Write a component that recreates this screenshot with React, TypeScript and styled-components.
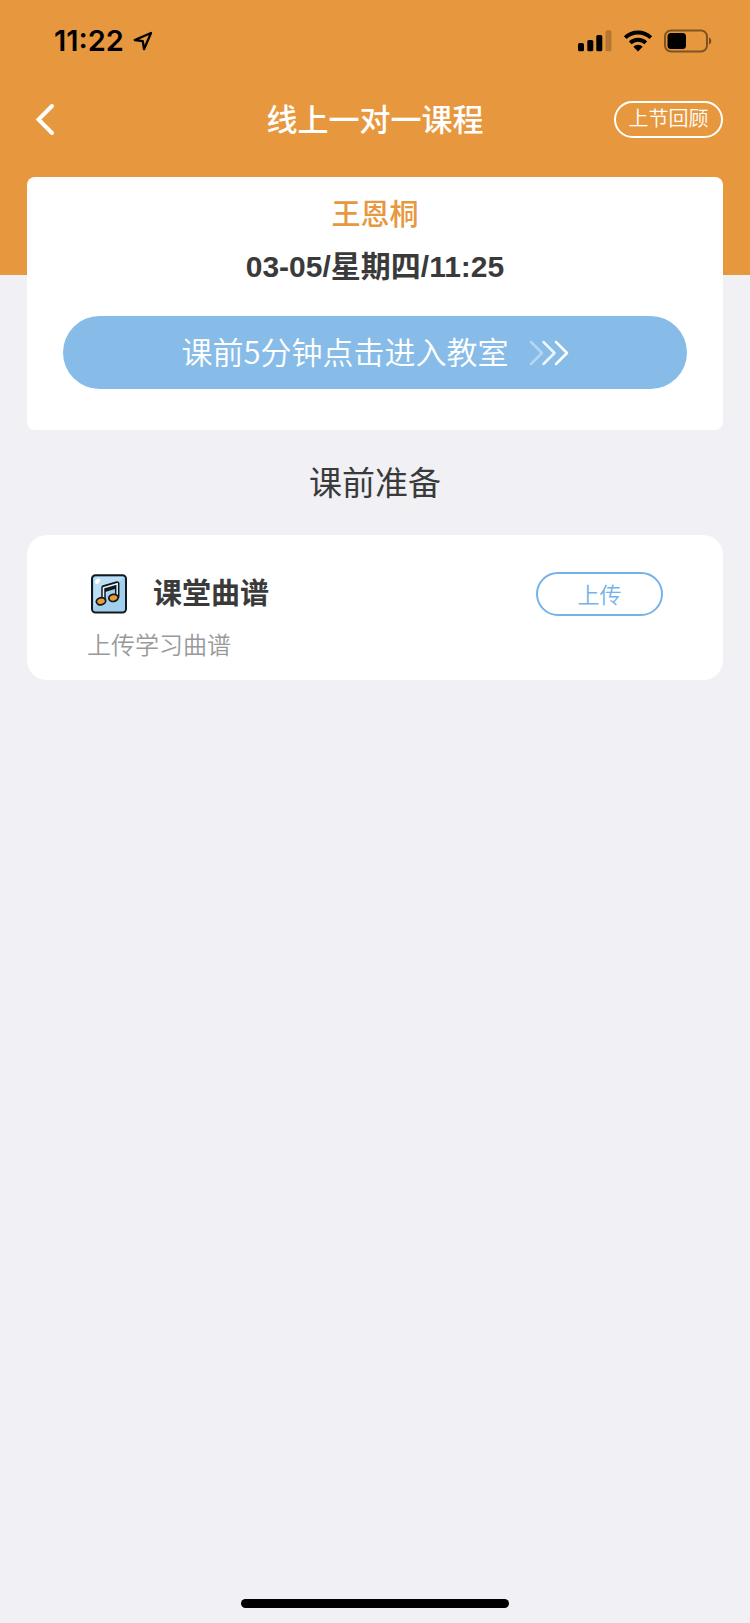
import React from "react";
import styled, { createGlobalStyle } from "styled-components";

const color = {
  orange: "#e7983f",
  blue: "#87bce8",
  outline: "#74b2ec",
  page: "#f0f0f5",
  text: "#3a3a3a",
  muted: "#999999",
};

const GlobalStyle = createGlobalStyle`
  * { box-sizing: border-box; }
  body {
    margin: 0;
    background: ${color.page};
    color: ${color.text};
    font-family: "Liberation Sans", "Noto Sans CJK SC", sans-serif;
  }
  h1, h2, h3, p { margin: 0; }
  button { font-family: "Noto Sans CJK SC", sans-serif; cursor: pointer; }
  svg { display: block; }
`;

const Page = styled.div`
  min-height: 100vh;
  display: flex;
  flex-direction: column;
`;

const Header = styled.header`
  background: ${color.orange};
  padding-bottom: 118px;
`;

const StatusBar = styled.div`
  display: flex;
  justify-content: space-between;
  align-items: center;
  height: 82px;
  padding: 0 38px 0 54px;
  color: #000;
`;

const StatusGroup = styled.div<{ $gap: number }>`
  display: flex;
  align-items: center;
  gap: ${(p) => p.$gap}px;
`;

const Clock = styled.time`
  font-family: Inter, sans-serif;
  font-size: 29px;
  font-weight: 600;
  line-height: 32px;
`;

const NavBar = styled.nav`
  display: grid;
  grid-template-columns: 1fr auto 1fr;
  align-items: center;
  height: 75px;
  padding: 0 27px;
  color: #fff;
`;

const BackButton = styled.button`
  justify-self: start;
  border: 0;
  padding: 0 8px;
  background: none;
  color: inherit;
`;

const NavTitle = styled.h1`
  padding-top: 2px;
  font-size: 31px;
  font-weight: 500;
  line-height: 40px;
`;

const PillButton = styled.button<{ $tone: string; $width: number; $height: number; $size: number }>`
  width: ${(p) => p.$width}px;
  height: ${(p) => p.$height}px;
  border: 2px solid ${(p) => p.$tone};
  border-radius: 24px;
  padding: 0 0 3px;
  background: none;
  color: ${(p) => p.$tone};
  font-size: ${(p) => p.$size}px;
  font-weight: 350;
  line-height: 30px;
  justify-self: end;
`;

const Main = styled.main`
  flex: 1;
  display: flex;
  flex-direction: column;
  margin-top: -98px;
  padding: 0 27px;
`;

const LessonCard = styled.section`
  display: flex;
  flex-direction: column;
  align-items: center;
  padding: 18px 36px 41px;
  border-radius: 8px;
  background: #fff;
`;

const StudentName = styled.h2`
  color: ${color.orange};
  font-size: 29px;
  font-weight: 500;
  line-height: 40px;
`;

const LessonTime = styled.p`
  margin: 12px 0 29px;
  font-size: 30px;
  font-weight: 700;
  line-height: 40px;
`;

const EnterButton = styled.button`
  display: flex;
  justify-content: center;
  align-items: center;
  gap: 20px;
  width: 100%;
  height: 73px;
  border: 0;
  border-radius: 37px;
  background: ${color.blue};
  color: #fff;
  font-size: 31px;
  font-weight: 350;
  line-height: 40px;
`;

const EnterLabel = styled.span`
  padding-bottom: 4px;
`;

const SectionTitle = styled.h2`
  padding: 34px 0 31px;
  font-size: 33px;
  font-weight: 400;
  line-height: 40px;
  text-align: center;
`;

const TaskCard = styled.section`
  padding: 37px 60px 16px;
  border-radius: 20px;
  background: #fff;
`;

const TaskRow = styled.div`
  display: flex;
  align-items: center;
  gap: 24px;
`;

const TaskTitle = styled.h3`
  flex: 1;
  font-size: 29px;
  font-weight: 700;
  line-height: 40px;
`;

const TaskNote = styled.p`
  margin-top: 12px;
  color: ${color.muted};
  font-size: 24px;
  font-weight: 350;
  line-height: 36px;
`;

const HomeIndicator = styled.div`
  align-self: center;
  width: 268px;
  height: 9px;
  margin-bottom: 15px;
  border-radius: 5px;
  background: #000;
`;

const LocationIcon = () => (
  <svg width="20" height="20" viewBox="0 0 20 20" fill="none" aria-hidden="true">
    <path d="M18 2 1.800 9l8 1.200 1.200 8z" stroke="#000" strokeWidth="2.300" strokeLinejoin="round" />
  </svg>
);

const SignalIcon = () => (
  <svg width="34" height="22" viewBox="0 0 34 22" aria-hidden="true">
    <rect x="0" y="13" width="6" height="8.300" rx="1.600" />
    <rect x="9.300" y="10" width="6" height="11.300" rx="1.600" />
    <rect x="18.300" y="5" width="6" height="16.300" rx="1.600" />
    <rect x="27.500" y="0.300" width="6" height="21" rx="1.600" opacity="0.220" />
  </svg>
);

const WifiIcon = () => (
  <svg width="30" height="22" viewBox="0 0 30 22" aria-hidden="true">
    <g fill="none" stroke="#000" strokeWidth="4">
      <path d="M2.200 7.600a18.600 18.600 0 0 1 25.600 0" />
      <path d="M7.200 12.900a11.500 11.500 0 0 1 15.600 0" />
    </g>
    <path d="M15 21.500l-4.700-4.700a6.700 6.700 0 0 1 9.400 0z" />
  </svg>
);

const BatteryIcon = () => (
  <svg width="48" height="24" viewBox="0 0 48 24" aria-hidden="true">
    <rect x="1" y="1.500" width="42" height="21" rx="6" fill="none" stroke="#000" strokeOpacity="0.450" strokeWidth="2" />
    <rect x="3.500" y="4" width="18.500" height="16" rx="3.500" />
    <path d="M45 8.500c3 1 3 6 0 7z" opacity="0.500" />
  </svg>
);

const BackIcon = () => (
  <svg width="20" height="34" viewBox="0 0 20 34" fill="none" aria-hidden="true">
    <path d="M17 3 3.500 16.500 17 30" stroke="currentColor" strokeWidth="4" strokeLinecap="round" />
  </svg>
);

const ForwardIcon = () => (
  <svg width="40" height="26" viewBox="0 0 40 26" fill="none" stroke="#fff" strokeWidth="2.500" strokeLinecap="round" strokeLinejoin="round" aria-hidden="true">
    <path d="m2 2 11 11L2 24" opacity="0.400" />
    <path d="m14.500 2 11 11-11 11" opacity="0.850" />
    <path d="m27 2 11 11-11 11" />
  </svg>
);

const MusicIcon = () => (
  <svg width="42" height="42" viewBox="0 0 42 42" aria-hidden="true">
    <rect x="5" y="2.200" width="34" height="37.300" rx="3.500" fill="#a3cfef" stroke="#111a20" strokeWidth="2" />
    <path d="M7 31V7q0-3 3-3h27L7 34z" fill="#bddff5" />
    <ellipse cx="10.600" cy="8.200" rx="3" ry="2" transform="rotate(-48 10.600 8.200)" fill="#fff" />
    <path d="M16.500 28V14.500L30.200 10.500v14" fill="none" stroke="#111a20" strokeWidth="4.500" strokeLinejoin="round" />
    <path d="M17 17.500 29.700 13.500" stroke="#111a20" strokeWidth="3.500" />
    <path d="M16.500 27V14.800l13.700-4v13" fill="none" stroke="#e9f4fb" strokeWidth="1.500" />
    <g fill="#ed9b30" stroke="#111a20" strokeWidth="1.800">
      <ellipse cx="14" cy="28.200" rx="4.700" ry="3.500" transform="rotate(-12 14 28.200)" />
      <ellipse cx="26.500" cy="24.900" rx="4.700" ry="3.500" transform="rotate(-12 26.500 24.900)" />
    </g>
  </svg>
);

export default function App() {
  return (
    <Page>
      <GlobalStyle />
      <Header>
        <StatusBar>
          <StatusGroup $gap={9}>
            <Clock>11:22</Clock>
            <LocationIcon />
          </StatusGroup>
          <StatusGroup $gap={11}>
            <SignalIcon />
            <WifiIcon />
            <BatteryIcon />
          </StatusGroup>
        </StatusBar>
        <NavBar>
          <BackButton aria-label="返回">
            <BackIcon />
          </BackButton>
          <NavTitle>线上一对一课程</NavTitle>
          <PillButton $tone="#fff" $width={109} $height={37} $size={20}>
            上节回顾
          </PillButton>
        </NavBar>
      </Header>
      <Main>
        <LessonCard>
          <StudentName>王恩桐</StudentName>
          <LessonTime>03-05/星期四/11:25</LessonTime>
          <EnterButton>
            <EnterLabel>课前5分钟点击进入教室</EnterLabel>
            <ForwardIcon />
          </EnterButton>
        </LessonCard>
        <SectionTitle>课前准备</SectionTitle>
        <TaskCard>
          <TaskRow>
            <MusicIcon />
            <TaskTitle>课堂曲谱</TaskTitle>
            <PillButton $tone={color.outline} $width={127} $height={44} $size={22}>
              上传
            </PillButton>
          </TaskRow>
          <TaskNote>上传学习曲谱</TaskNote>
        </TaskCard>
      </Main>
      <HomeIndicator />
    </Page>
  );
}
